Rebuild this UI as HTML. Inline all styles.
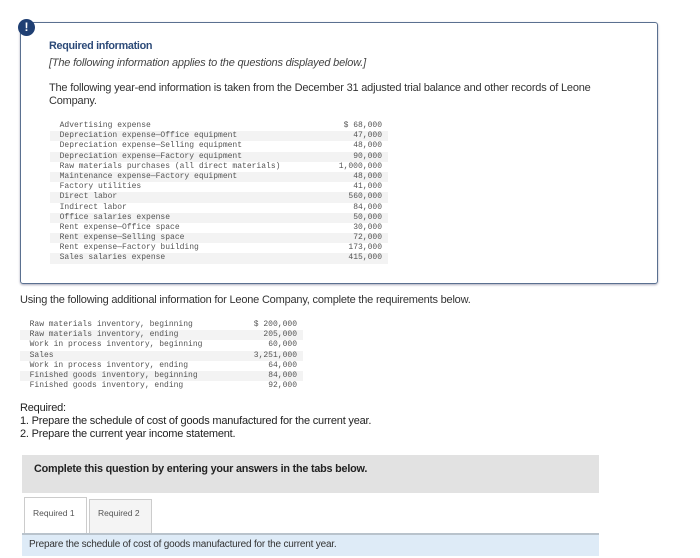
<!DOCTYPE html>
<html><head><style>
body{margin:0;width:700px;height:558px;background:#fff;font-family:"Liberation Sans",sans-serif;position:relative;overflow:hidden;color:#222}
.abs{position:absolute}
.box{left:20px;top:22px;width:636px;height:260px;border:1px solid #5a7090;border-radius:3px;box-shadow:0 1px 2px #aab}
.icon{left:18px;top:19px;width:17px;height:17px;border-radius:50%;background:#1f3f73;color:#fff;font-size:12px;font-weight:bold;text-align:center;line-height:17px}
.mono{font-family:"Liberation Mono",monospace;font-size:8px;color:#555;line-height:10.2px}
.row{height:10.2px;white-space:pre;position:relative}
.row:nth-child(even){background:#f3f3f3}
.row span{position:absolute;right:6px;top:0}
.t{font-size:11px;color:#333;letter-spacing:-0.2px}
</style></head><body>
<div class="abs box"></div>
<div class="abs icon">!</div>
<div class="abs" style="left:49px;top:40px;font-size:10.8px;font-weight:bold;color:#2c4a78;letter-spacing:-0.3px">Required information</div>
<div class="abs t" style="left:49px;top:57px;font-style:italic;color:#444">[The following information applies to the questions displayed below.]</div>
<div class="abs t" style="left:49px;top:82px;line-height:13px;width:560px">The following year-end information is taken from the December 31 adjusted trial balance and other records of Leone Company.</div>
<div class="abs mono" style="left:50px;top:121px;width:338px">
<div class="row">  Advertising expense<span>$ 68,000</span></div>
<div class="row">  Depreciation expense—Office equipment<span>47,000</span></div>
<div class="row">  Depreciation expense—Selling equipment<span>48,000</span></div>
<div class="row">  Depreciation expense—Factory equipment<span>90,000</span></div>
<div class="row">  Raw materials purchases (all direct materials)<span>1,000,000</span></div>
<div class="row">  Maintenance expense—Factory equipment<span>48,000</span></div>
<div class="row">  Factory utilities<span>41,000</span></div>
<div class="row">  Direct labor<span>560,000</span></div>
<div class="row">  Indirect labor<span>84,000</span></div>
<div class="row">  Office salaries expense<span>50,000</span></div>
<div class="row">  Rent expense—Office space<span>30,000</span></div>
<div class="row">  Rent expense—Selling space<span>72,000</span></div>
<div class="row">  Rent expense—Factory building<span>173,000</span></div>
<div class="row">  Sales salaries expense<span>415,000</span></div>
</div>
<div class="abs t" style="left:20px;top:294px">Using the following additional information for Leone Company, complete the requirements below.</div>
<div class="abs mono" style="left:20px;top:320px;width:283px">
<div class="row">  Raw materials inventory, beginning<span>$ 200,000</span></div>
<div class="row">  Raw materials inventory, ending<span>205,000</span></div>
<div class="row">  Work in process inventory, beginning<span>60,000</span></div>
<div class="row">  Sales<span>3,251,000</span></div>
<div class="row">  Work in process inventory, ending<span>64,000</span></div>
<div class="row">  Finished goods inventory, beginning<span>84,000</span></div>
<div class="row">  Finished goods inventory, ending<span>92,000</span></div>
</div>
<div class="abs t" style="left:20px;top:402px;line-height:13px;color:#222">Required:<br>1. Prepare the schedule of cost of goods manufactured for the current year.<br>2. Prepare the current year income statement.</div>
<div class="abs" style="left:22px;top:455px;width:577px;height:38px;background:#e2e2e2"></div>
<div class="abs" style="left:34px;top:463px;font-size:10.8px;font-weight:bold;color:#222;letter-spacing:-0.2px">Complete this question by entering your answers in the tabs below.</div>
<div class="abs" style="left:24px;top:497px;width:61px;height:37px;border:1px solid #ccc;border-bottom:none;background:#fff"></div>
<div class="abs" style="left:89px;top:499px;width:61px;height:34px;border:1px solid #ccc;background:#f4f4f4"></div>
<div class="abs" style="left:33px;top:508px;font-size:8.5px;color:#555">Required 1</div>
<div class="abs" style="left:98px;top:508px;font-size:8.5px;color:#555">Required 2</div>
<div class="abs" style="left:22px;top:533px;width:577px;height:2px;background:#b9c3cc"></div>
<div class="abs" style="left:22px;top:535px;width:577px;height:21px;background:#deebf7"></div>
<div class="abs" style="left:29px;top:539px;font-size:10px;color:#333;letter-spacing:-0.2px">Prepare the schedule of cost of goods manufactured for the current year.</div>
</body></html>
